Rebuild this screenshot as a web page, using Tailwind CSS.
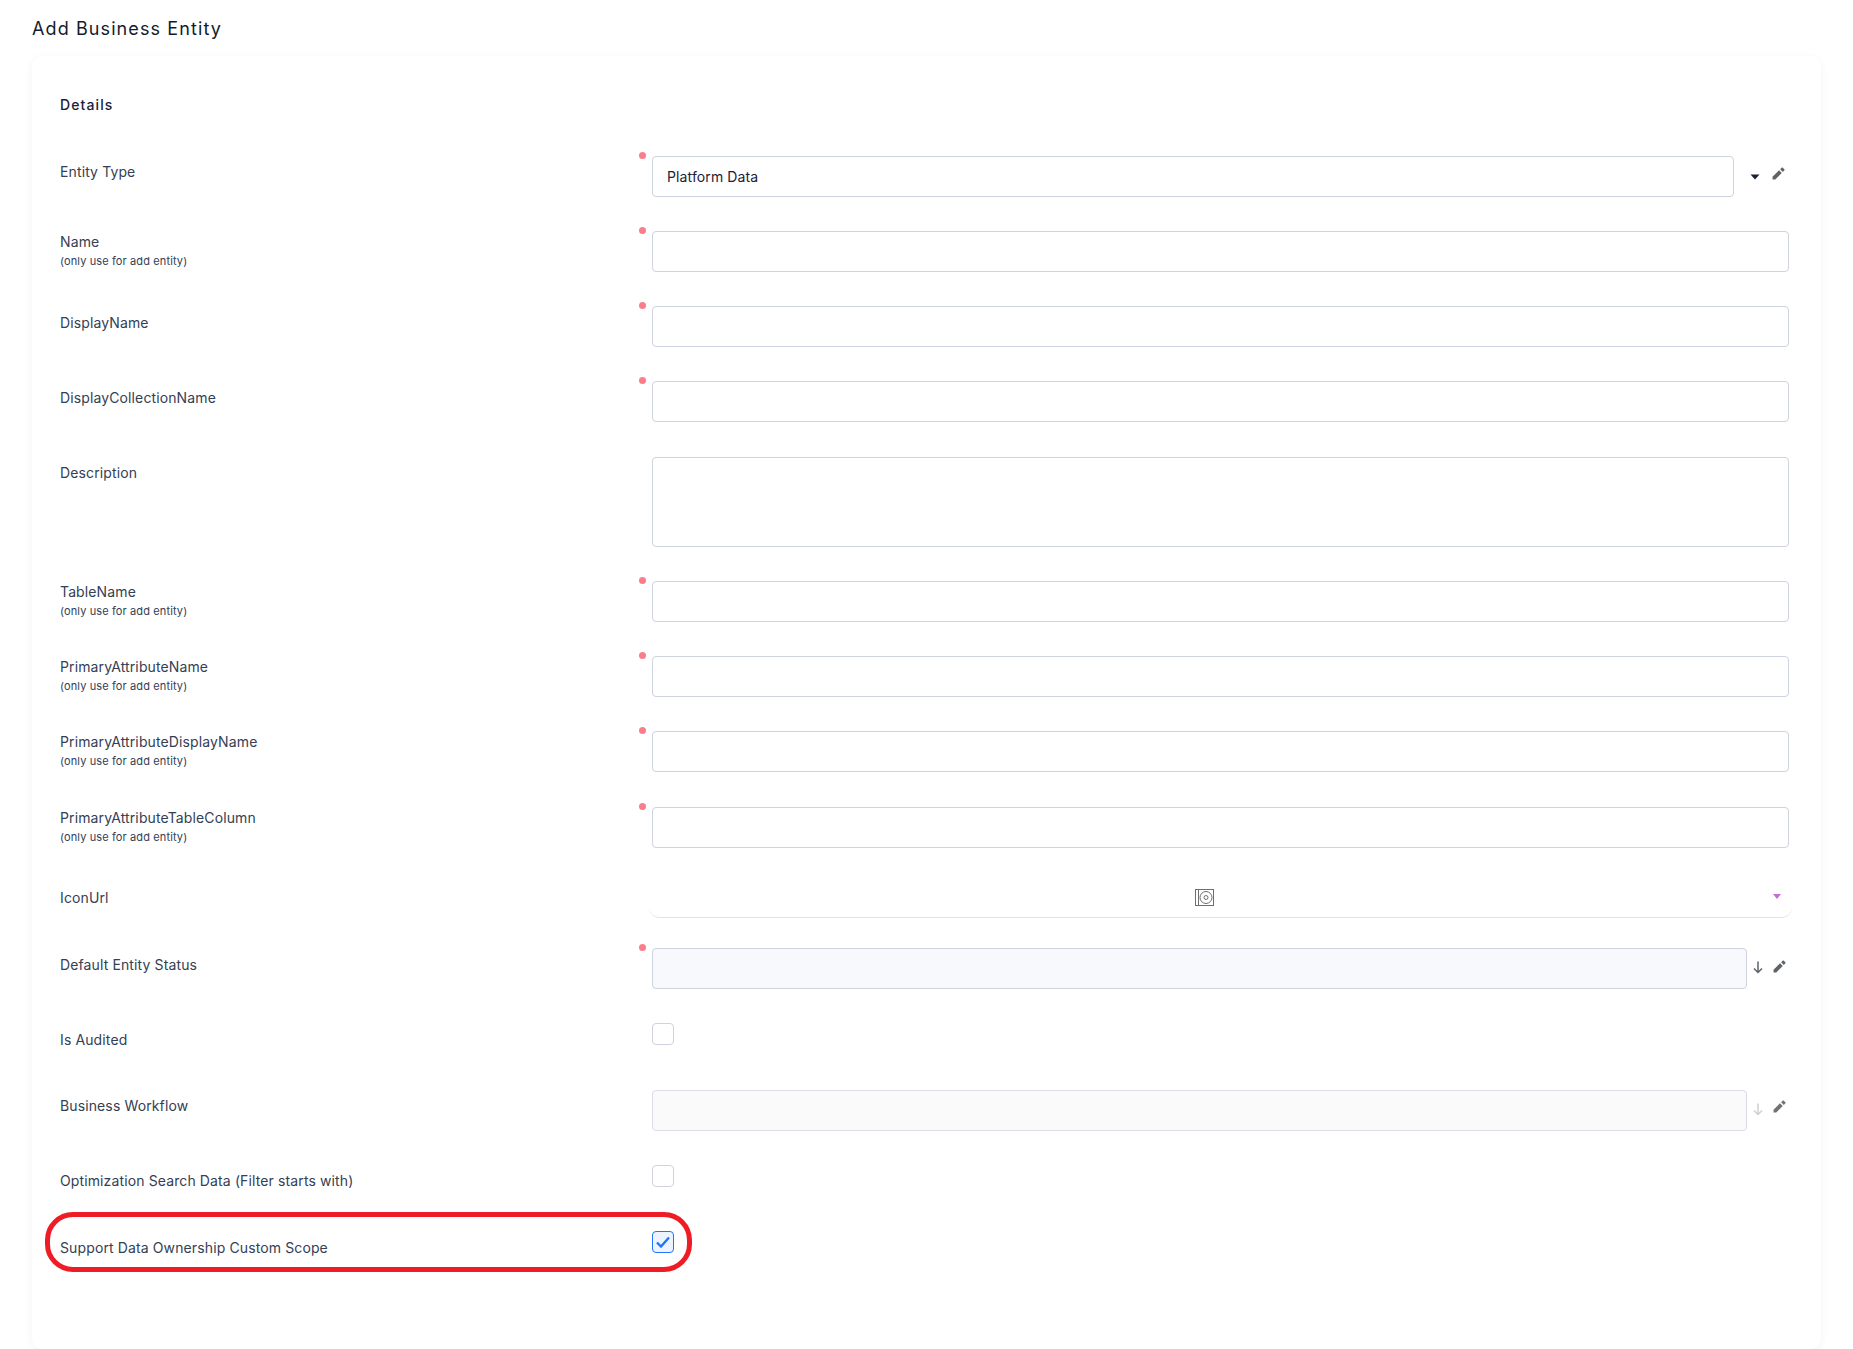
<!DOCTYPE html>
<html lang="en">
  <head>
    <meta charset="UTF-8" />
    <title>Add Business Entity</title>
    <script src="https://cdn.jsdelivr.net/npm/@tailwindcss/browser@4"></script>
  </head>
  <body class="bg-white font-['Inter',sans-serif] text-[14px] tracking-[0.12px] text-[#344054] h-[1349px] overflow-hidden">
    <h1 class="pl-[32px] pt-[17px] h-[56px] text-[18px] leading-[24px] font-normal tracking-[1.1px] text-[#141b2f]">Add Business Entity</h1>

    <!-- Card -->
    <div class="relative mx-[32px] h-[1293px] pl-[28px] pr-[32px] rounded-[10px] bg-white shadow-[0_2px_10px_rgba(0,0,0,0.05)]">
      <div class="h-[100px] pt-[39px] text-[14px] leading-[20px] font-medium tracking-[1.1px] text-[#1a2238]">Details</div>

      <!-- Entity Type -->
      <div class="grid grid-cols-[592px_1fr] h-[75px]">
        <div class="pt-[6px] leading-[20px]">Entity Type</div>
        <div class="relative flex items-start">
          <span class="absolute left-[-13px] top-[-4px] size-[7px] rounded-full bg-[#fb7d8b]"></span>
          <div class="w-[1082px] h-[41px] border border-[#cfd2df] rounded-[4px] px-[14px] flex items-center text-[#1a2238] leading-[20px]">Platform Data</div>
          <svg class="ml-[16px] mt-[18px]" width="10" height="6" viewBox="0 0 10 6"><path d="M0.5 0.5h9L5 5.5z" fill="#1a2238"/></svg>
          <svg class="ml-[12px] mt-[11px]" width="13" height="13" viewBox="0 0 12 12"><path d="M0.5 9v2.5H3L9 5.5 6.5 3zM7.5 2 10 4.5l1.4-1.4a.7.7 0 0 0 0-1L9.9.6a.7.7 0 0 0-1 0z" fill="#5f6368"/></svg>
        </div>
      </div>

      <!-- Name -->
      <div class="grid grid-cols-[592px_1fr] h-[75px]">
        <div class="pt-[1px] leading-[20px]">Name<div class="text-[11px] leading-[18px]">(only use for add entity)</div></div>
        <div class="relative">
          <span class="absolute left-[-13px] top-[-4px] size-[7px] rounded-full bg-[#fb7d8b]"></span>
          <div class="h-[41px] border border-[#cfd2df] rounded-[4px]"></div>
        </div>
      </div>

      <!-- DisplayName -->
      <div class="grid grid-cols-[592px_1fr] h-[75px]">
        <div class="pt-[7px] leading-[20px]">DisplayName</div>
        <div class="relative">
          <span class="absolute left-[-13px] top-[-4px] size-[7px] rounded-full bg-[#fb7d8b]"></span>
          <div class="h-[41px] border border-[#cfd2df] rounded-[4px]"></div>
        </div>
      </div>

      <!-- DisplayCollectionName -->
      <div class="grid grid-cols-[592px_1fr] h-[76px]">
        <div class="pt-[7px] leading-[20px]">DisplayCollectionName</div>
        <div class="relative">
          <span class="absolute left-[-13px] top-[-4px] size-[7px] rounded-full bg-[#fb7d8b]"></span>
          <div class="h-[41px] border border-[#cfd2df] rounded-[4px]"></div>
        </div>
      </div>

      <!-- Description -->
      <div class="grid grid-cols-[592px_1fr] h-[124px]">
        <div class="pt-[6px] leading-[20px]">Description</div>
        <div class="h-[90px] border border-[#cfd2df] rounded-[4px]"></div>
      </div>

      <!-- TableName -->
      <div class="grid grid-cols-[592px_1fr] h-[75px]">
        <div class="pt-[1px] leading-[20px]">TableName<div class="text-[11px] leading-[18px]">(only use for add entity)</div></div>
        <div class="relative">
          <span class="absolute left-[-13px] top-[-4px] size-[7px] rounded-full bg-[#fb7d8b]"></span>
          <div class="h-[41px] border border-[#cfd2df] rounded-[4px]"></div>
        </div>
      </div>

      <!-- PrimaryAttributeName -->
      <div class="grid grid-cols-[592px_1fr] h-[75px]">
        <div class="pt-[1px] leading-[20px]">PrimaryAttributeName<div class="text-[11px] leading-[18px]">(only use for add entity)</div></div>
        <div class="relative">
          <span class="absolute left-[-13px] top-[-4px] size-[7px] rounded-full bg-[#fb7d8b]"></span>
          <div class="h-[41px] border border-[#cfd2df] rounded-[4px]"></div>
        </div>
      </div>

      <!-- PrimaryAttributeDisplayName -->
      <div class="grid grid-cols-[592px_1fr] h-[76px]">
        <div class="pt-[1px] leading-[20px]">PrimaryAttributeDisplayName<div class="text-[11px] leading-[18px]">(only use for add entity)</div></div>
        <div class="relative">
          <span class="absolute left-[-13px] top-[-4px] size-[7px] rounded-full bg-[#fb7d8b]"></span>
          <div class="h-[41px] border border-[#cfd2df] rounded-[4px]"></div>
        </div>
      </div>

      <!-- PrimaryAttributeTableColumn -->
      <div class="grid grid-cols-[592px_1fr] h-[71px]">
        <div class="pt-[1px] leading-[20px]">PrimaryAttributeTableColumn<div class="text-[11px] leading-[18px]">(only use for add entity)</div></div>
        <div class="relative">
          <span class="absolute left-[-13px] top-[-4px] size-[7px] rounded-full bg-[#fb7d8b]"></span>
          <div class="h-[41px] border border-[#cfd2df] rounded-[4px]"></div>
        </div>
      </div>

      <!-- IconUrl -->
      <div class="grid grid-cols-[592px_1fr] h-[70px]">
        <div class="pt-[10px] leading-[20px]">IconUrl</div>
        <div class="relative -ml-[3px] -mr-[3px] h-[40px] border-b border-[#e2e2e6] rounded-b-[10px] flex items-center justify-center">
          <svg class="mr-[33px]" width="19" height="17" viewBox="0 0 19 17" fill="none" stroke="#6f6f6f"><rect x="0.5" y="0.5" width="18" height="16"/><path d="M3.5 0.5v16"/><circle cx="11" cy="8.5" r="6"/><circle cx="11" cy="8.5" r="2"/></svg>
          <svg class="absolute right-[11px] top-[16px]" width="8" height="5" viewBox="0 0 8 5"><path d="M0 0h8L4 5z" fill="#c06fd2"/></svg>
        </div>
      </div>

      <!-- Default Entity Status -->
      <div class="grid grid-cols-[592px_1fr] h-[75px]">
        <div class="pt-[7px] leading-[20px]">Default Entity Status</div>
        <div class="relative flex items-start">
          <span class="absolute left-[-13px] top-[-4px] size-[7px] rounded-full bg-[#fb7d8b]"></span>
          <div class="w-[1095px] h-[41px] border border-[#cfd2df] rounded-[4px] bg-[#f8f9fc]"></div>
          <svg class="ml-[6px] mt-[13px]" width="10" height="13" viewBox="0 0 10 13" fill="none" stroke="#5f6368" stroke-width="1.5"><path d="M5 0.5v11M1 7.5l4 4 4-4"/></svg>
          <svg class="ml-[10px] mt-[12px]" width="13" height="13" viewBox="0 0 12 12"><path d="M0.5 9v2.5H3L9 5.5 6.5 3zM7.5 2 10 4.5l1.4-1.4a.7.7 0 0 0 0-1L9.9.6a.7.7 0 0 0-1 0z" fill="#5f6368"/></svg>
        </div>
      </div>

      <!-- Is Audited -->
      <div class="grid grid-cols-[592px_1fr] h-[67px]">
        <div class="pt-[7px] leading-[20px]">Is Audited</div>
        <div class="size-[22px] border border-[#cfd2df] rounded-[4px]"></div>
      </div>

      <!-- Business Workflow -->
      <div class="grid grid-cols-[592px_1fr] h-[75px]">
        <div class="pt-[6px] leading-[20px]">Business Workflow</div>
        <div class="flex items-start">
          <div class="w-[1095px] h-[41px] border border-[#dcdde8] rounded-[4px] bg-[#fafafa]"></div>
          <svg class="ml-[6px] mt-[13px]" width="10" height="13" viewBox="0 0 10 13" fill="none" stroke="#d0d0d0" stroke-width="1.5"><path d="M5 0.5v11M1 7.5l4 4 4-4"/></svg>
          <svg class="ml-[10px] mt-[10px]" width="13" height="13" viewBox="0 0 12 12"><path d="M0.5 9v2.5H3L9 5.5 6.5 3zM7.5 2 10 4.5l1.4-1.4a.7.7 0 0 0 0-1L9.9.6a.7.7 0 0 0-1 0z" fill="#6f7276"/></svg>
        </div>
      </div>

      <!-- Optimization Search Data -->
      <div class="grid grid-cols-[592px_1fr] h-[66px]">
        <div class="pt-[6px] leading-[20px]">Optimization Search Data (Filter starts with)</div>
        <div class="size-[22px] border border-[#cfd2df] rounded-[4px]"></div>
      </div>

      <!-- Support Data Ownership Custom Scope -->
      <div class="grid grid-cols-[592px_1fr]">
        <div class="pt-[7px] leading-[20px]">Support Data Ownership Custom Scope</div>
        <div class="size-[22px] border border-[#1f75ff] rounded-[4px] bg-[#edf4ff] flex items-center justify-center">
          <svg width="14" height="12" viewBox="0 0 14 12" fill="none" stroke="#1f75ff" stroke-width="2.4"><path d="M1 6.5l4 4 8-9"/></svg>
        </div>
      </div>

      <!-- Red annotation -->
      <div class="absolute left-[13px] top-[1156px] w-[647px] h-[60px] border-[5px] border-[#ee1c25] rounded-[28px]"></div>
    </div>
  </body>
</html>
